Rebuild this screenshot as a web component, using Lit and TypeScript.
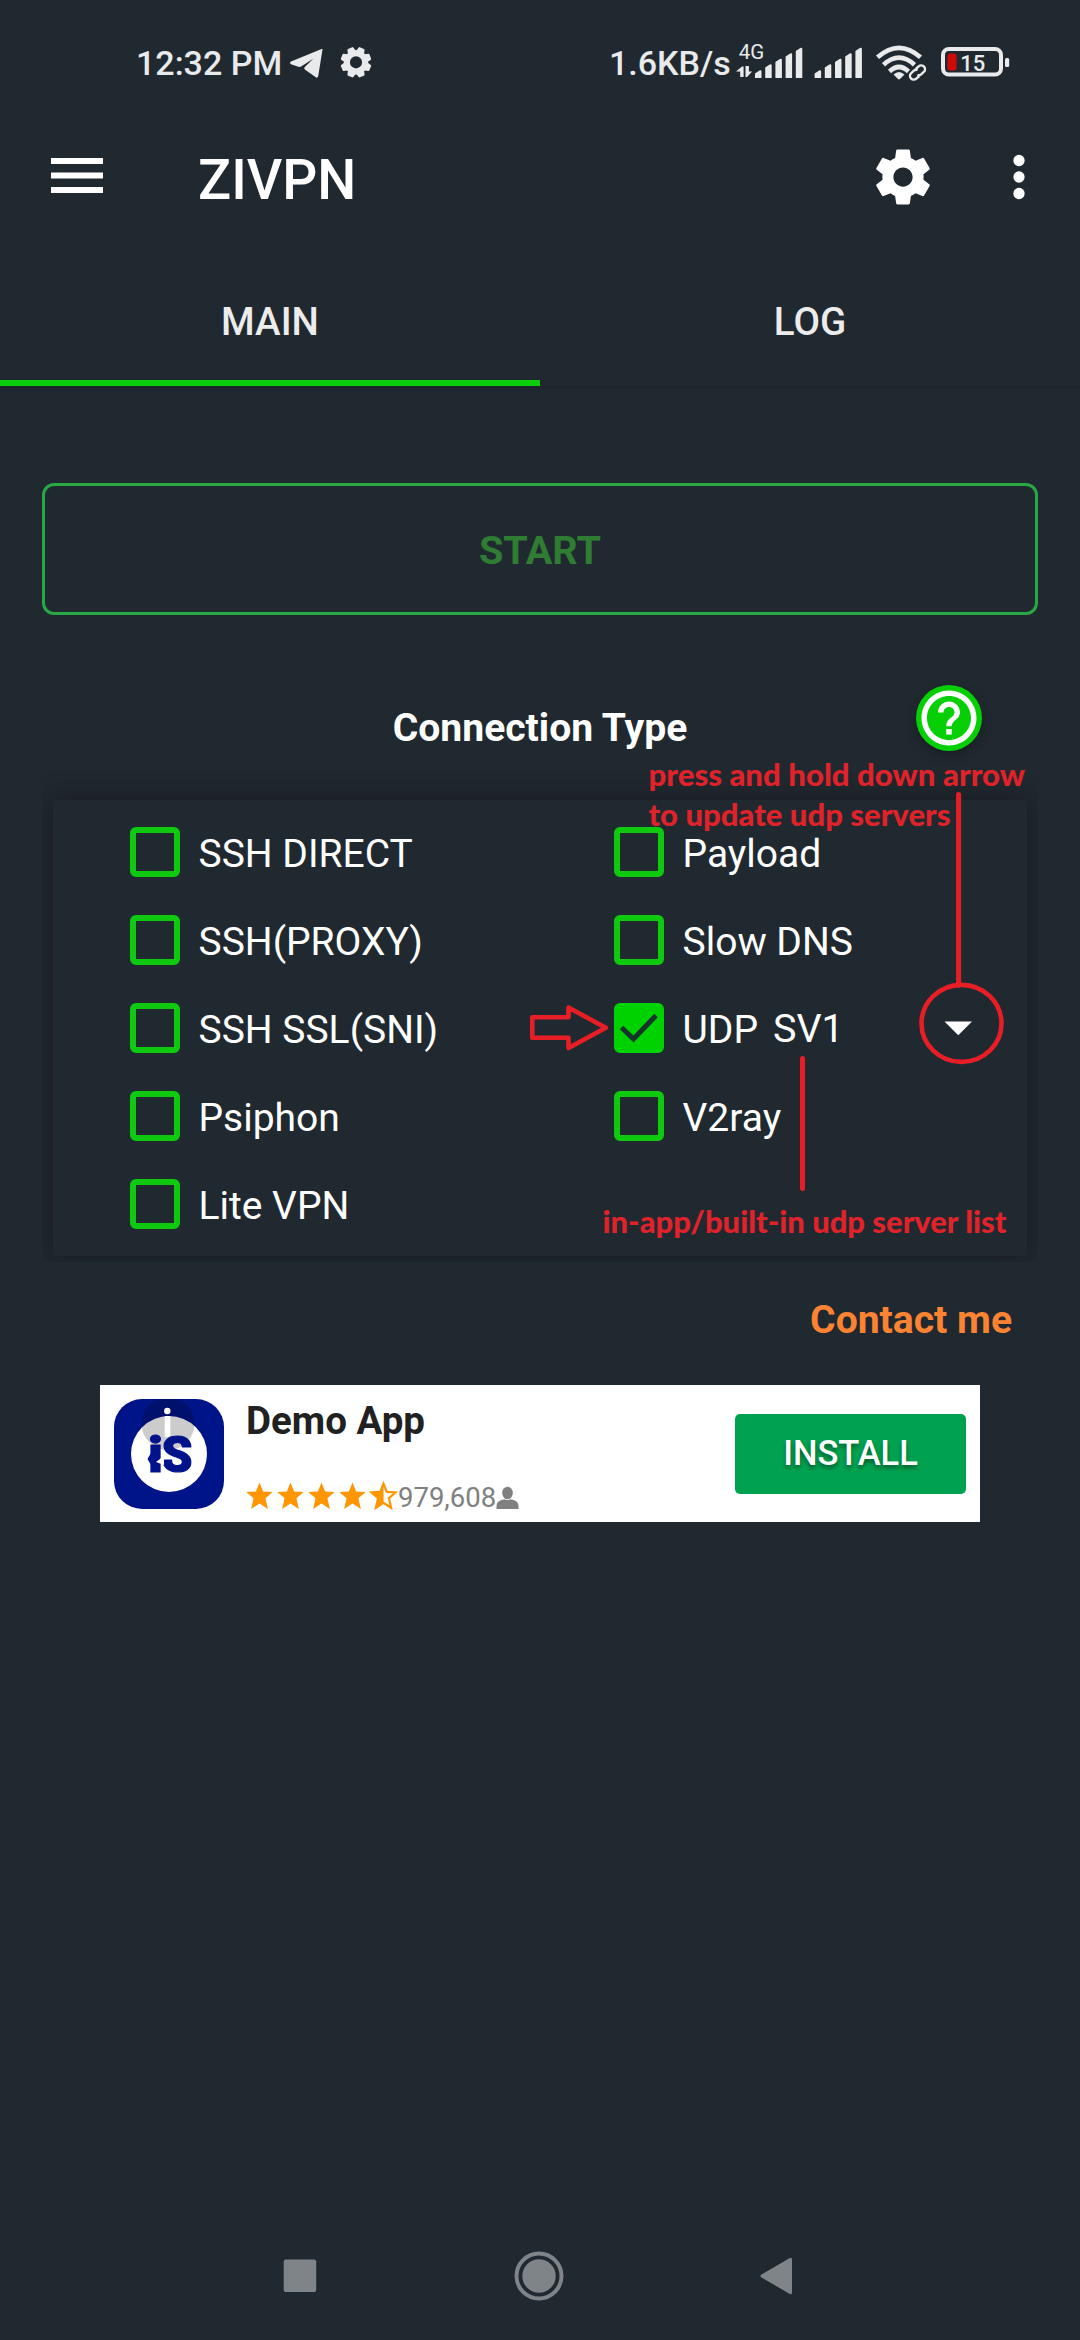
import { LitElement, html, css, svg, nothing } from "lit";
import { customElement, property } from "lit/decorators.js";

const STAR = "M0-13.8 L3.6-4.9 L13.2-4.2 L5.9 2 L8.4 12.6 L0 7.2 L-8.4 12.6 L-5.9 2 L-13.2-4.2 L-3.6-4.9Z";
const GEAR =
  "M19.43 12.98c.04-.32.07-.64.07-.98s-.03-.66-.07-.98l2.11-1.65c.19-.15.24-.42.12-.64l-2-3.46c-.12-.22-.39-.3-.61-.22l-2.49 1c-.52-.4-1.08-.73-1.69-.98l-.38-2.65C14.46 2.18 14.25 2 14 2h-4c-.25 0-.46.18-.49.42l-.38 2.65c-.61.25-1.17.59-1.69.98l-2.49-1c-.23-.09-.49 0-.61.22l-2 3.46c-.13.22-.07.49.12.64l2.11 1.65c-.04.32-.07.65-.07.98s.03.66.07.98l-2.11 1.65c-.19.15-.24.42-.12.64l2 3.46c.12.22.39.3.61.22l2.49-1c.52.4 1.08.73 1.69.98l.38 2.65c.03.24.24.42.49.42h4c.25 0 .46-.18.49-.42l.38-2.65c.61-.25 1.17-.59 1.69-.98l2.49 1c.23.09.49 0 .61-.22l2-3.46c.12-.22.07-.49-.12-.64l-2.11-1.65zM12 15.5c-1.93 0-3.5-1.57-3.5-3.5s1.57-3.5 3.5-3.5 3.5 1.57 3.5 3.5-1.57 3.5-3.5 3.5z";

@customElement("status-bar")
class StatusBar extends LitElement {
  static styles = css`
    :host {
      display: flex;
      height: 42px;
      padding: 42px 0 0 136px;
      color: #e8eaeb;
      fill: #e8eaeb;
      font: 500 34px/42px Roboto, sans-serif;
      white-space: nowrap;
    }
    .time { width: 150px; }
    .speed { width: 127px; margin-left: 236px; }
    svg { display: block; flex: none; overflow: visible; }
    .small { font: 400 20.5px Roboto, sans-serif; }
    .level { font: 500 22px Roboto, sans-serif; }
    .line { fill: none; stroke: #e8eaeb; }
    .low { fill: #d00a0a; }
  `;

  private bars(x: number) {
    return [8, 14, 19.5, 25, 30.5].map((h, i) => {
      const left = x + i * 10.2;
      return svg`<path d="M${left} 78v${-h + 3.5}l4.5-3q2-1 2 1V78z" />`;
    });
  }

  render() {
    const teeth = Array.from({ length: 8 }, (_, i) => i * 45 + 22.5);
    return html`
      <span class="time">12:32 PM</span>
      <svg width="87" height="42" viewBox="286 42 87 42">
        <path d="M322.5 49.5Q323 48.7 321.6 49.1L291 61.6Q289 63 291 64.3L298.4 66.8Q300 67.2 301.5 66.2L313.5 58.6 304.6 67.2Q303.6 68.3 304.8 69.4L315.5 77Q317.5 78.6 318.2 76.2Z" />
        <circle cx="356" cy="62.3" r="9.1" fill="none" stroke="#e8eaeb" stroke-width="6" />
        ${teeth.map(
          (a) => svg`<path d="M351.300 53L352.800 47.600Q353 46.900 353.800 46.900H358.200Q359 46.900 359.200 47.600L360.700 53Z" transform="rotate(${a} 356 62.3)" />`
        )}
      </svg>
      <span class="speed">1.6KB/s</span>
      <svg width="274" height="42" viewBox="736 42 274 42">
        <text class="small" x="738.8" y="59">4G</text>
        <path d="M736 71.5l6-5h1.6V77h-3.4v-5.500zM745.500 66h3.400v5.500h3.200l-5 5.500h-1.600z" />
        ${this.bars(755)} ${this.bars(814.6)}
        <g class="line" stroke-width="4.6">
          <path d="M877.5 57.300Q899 38.300 920.500 57.300" />
          <path d="M883.5 64.800Q899 50.500 914.500 64.800" />
          <path d="M889.500 71.500Q899 62.500 908.500 71.500" />
        </g>
        <path d="M893.500 74.500Q899 69.500 904.500 74.500L900 79Q899 79.800 898 79Z" />
        <g transform="rotate(-42 917.500 72.500)">
          <rect x="908" y="67.500" width="19" height="10" rx="5" fill="#212930" stroke="#212930" stroke-width="3" />
          <g class="line" stroke-width="2.400">
            <path d="M916.500 76.300h-4a3.800 3.800 0 0 1 0-7.600h3.500a3.800 3.800 0 0 1 3.300 2" />
            <path d="M918.500 68.700h4a3.800 3.800 0 0 1 0 7.600h-3.500a3.800 3.800 0 0 1-3.300-2" />
          </g>
        </g>
        <rect class="line" x="943" y="49" width="58" height="25.500" rx="6" stroke-width="4" />
        <rect x="1005" y="58" width="4.200" height="9" rx="1.500" />
        <rect class="low" x="947.500" y="53.500" width="9" height="17" rx="2.500" />
        <text class="level" x="960.300" y="71">15</text>
      </svg>
    `;
  }
}

@customElement("check-item")
class CheckItem extends LitElement {
  @property() label = "";
  @property() extra = "";
  @property({ type: Boolean }) checked = false;

  static styles = css`
    :host {
      display: flex;
      align-items: center;
      height: 88px;
      font: 400 39px/46px Roboto, sans-serif;
      color: #fff;
      white-space: nowrap;
    }
    .box {
      box-sizing: border-box;
      flex: none;
      width: 50px;
      height: 50px;
      border: 6px solid #0fc90f;
      border-radius: 6px;
      margin-right: 18.5px;
    }
    .on { background: #00d200; border-color: #00d200; }
    .tick { display: block; width: 38px; height: 38px; overflow: visible; }
    .label { padding-top: 4px; }
    .extra { margin-left: 15px; padding-top: 2px; font-size: 39.5px; }
  `;

  render() {
    return html`
      <span class="box ${this.checked ? "on" : ""}">
        ${this.checked
          ? html`<svg class="tick" viewBox="0 0 38 38">
              <path d="M1.500 18.500L13.500 30L36 6.500" fill="none" stroke="#16352a" stroke-width="5" />
            </svg>`
          : nothing}
      </span>
      <span class="label">${this.label}</span>
      ${this.extra ? html`<span class="extra">${this.extra}</span>` : nothing}
    `;
  }
}

@customElement("ad-banner")
class AdBanner extends LitElement {
  static styles = css`
    :host {
      box-sizing: border-box;
      display: flex;
      width: 880px;
      height: 137px;
      margin-left: 100px;
      padding: 14px;
      background: #fff;
      font-family: Roboto, sans-serif;
    }
    .logo { flex: none; width: 110px; height: 110px; }
    .mark { font: 900 50px Roboto, sans-serif; fill: #00138a; stroke: #00138a; stroke-width: 1.2px; }
    .info { flex: 1; padding-left: 22px; }
    .name { margin-top: -1px; font: 700 38.5px/45px Roboto, sans-serif; color: #212121; }
    .rating { display: flex; padding-top: 36px; height: 34px; }
    .stars { width: 153px; height: 34px; margin-left: -1px; }
    .count { padding-top: 2px; font: 400 27.5px/34px Roboto, sans-serif; color: #808080; }
    .person { width: 24px; height: 34px; }
    .install {
      width: 231px;
      height: 80px;
      margin-top: 15px;
      border-radius: 5px;
      background: #00a250;
      color: #fff;
      font: 500 34.500px/78px Roboto, sans-serif;
      text-align: center;
      text-shadow: 0 3px 4px rgba(0, 0, 0, 0.45);
    }
  `;

  render() {
    return html`
      <svg class="logo" viewBox="114 1399 110 110">
        <defs>
          <clipPath id="tile"><rect x="114" y="1399" width="110" height="110" rx="28" /></clipPath>
        </defs>
        <g clip-path="url(#tile)">
          <rect x="114" y="1399" width="110" height="110" fill="#001489" />
          <circle cx="169" cy="1454" r="38" fill="#fff" />
          <circle cx="168" cy="1423.500" r="26.500" fill="#000" opacity=".2" />
        </g>
        <circle cx="167.300" cy="1411" r="3.200" fill="#fff" />
        <rect x="164.700" y="1416" width="5.600" height="21" fill="#fff" />
        <text class="mark" x="148" y="1472" textLength="15" lengthAdjust="spacingAndGlyphs">i</text>
        <text class="mark" x="161.500" y="1472" textLength="31" lengthAdjust="spacingAndGlyphs">S</text>
        <path d="M151 1453l-3.500 6 3.500 6z" fill="#00138a" />
        <path d="M156 1462l8-6v9z" fill="#fff" />
      </svg>
      <div class="info">
        <div class="name">Demo App</div>
        <div class="rating">
          <svg class="stars" viewBox="245 1479 153 34">
            ${[259.5, 290.5, 321.5, 352.5].map(
              (x) => svg`<path d=${STAR} fill="#ff9500" transform="translate(${x} 1496.300)" />`
            )}
            <g transform="translate(383.500 1496.300)">
              <path d=${STAR} fill="#fff" stroke="#ff9500" stroke-width="2.400" transform="scale(.91)" />
              <path d="M0-13.800V7L-8.400 12.600-5.900 2-13.200-4.200-3.600-4.900Z" fill="#ff9500" />
            </g>
          </svg>
          <span class="count">979,608</span>
          <svg class="person" viewBox="494.500 1479 24 34" fill="#808080">
            <ellipse cx="506" cy="1493" rx="5.300" ry="6.300" />
            <path d="M495 1509v-3q0-4.500 5-6l3-.800q3 1.800 6 0l3 .800q5 1.500 5 6v3z" />
          </svg>
        </div>
      </div>
      <div class="install">INSTALL</div>
    `;
  }
}

@customElement("app-root")
class AppRoot extends LitElement {
  static styles = css`
    :host {
      position: relative;
      display: flex;
      flex-direction: column;
      width: 1080px;
      height: 2340px;
      overflow: hidden;
      background: #212930;
      color: #fff;
      font: 700 39.1px/46px Roboto, sans-serif;
    }
    .appbar { display: flex; align-items: center; height: 186px; padding-left: 51px; flex: none; }
    .menu { width: 52px; height: 36px; margin-top: -2px; }
    .title { flex: 1; padding: 6px 0 0 95px; font: 500 55px/64px Roboto, sans-serif; }
    .icon { width: 66px; height: 66px; fill: #fff; }
    .more { margin: 0 28px 0 50px; }
    .tabs { display: flex; height: 116px; flex: none; box-shadow: 0 2px 3px rgba(0, 0, 0, 0.15); }
    .tab {
      flex: 1;
      box-sizing: border-box;
      padding-top: 29px;
      border-bottom: 6px solid transparent;
      text-align: center;
      font-weight: 500;
      font-size: 38.5px;
      color: #ececec;
    }
    .active { border-color: #0bcd0b; }
    .start {
      flex: none;
      box-sizing: border-box;
      height: 132px;
      margin: 97px 42px 0;
      padding-top: 42px;
      border: 3px solid #28a745;
      border-radius: 12px;
      text-align: center;
      font-size: 39.6px;
      color: #2e7d32;
    }
    .heading {
      flex: none;
      display: grid;
      grid-template-columns: 1fr auto 1fr;
      height: 66px;
      margin-top: 70px;
      line-height: 86px;
    }
    .heading-text { grid-column: 2; }
    .help {
      justify-self: end;
      width: 66px;
      height: 66px;
      margin-right: 98px;
      border-radius: 50%;
      background: #06cf06;
      box-shadow: 0 5px 12px rgba(0, 0, 0, 0.3);
    }
    .frame { flex: none; margin: 21px 42px 0; padding: 28px 11px 6px; overflow: hidden; }
    .panel {
      display: grid;
      grid-template-columns: 484px 1fr;
      padding: 8px 0 8px 77px;
      background: #212930;
      box-shadow: 0 0 26px 4px rgba(0, 0, 0, 0.3);
    }
    .udp { display: flex; justify-content: space-between; align-items: center; }
    .contact { flex: none; height: 88px; padding: 35px 68px 0 0; text-align: right; color: #fb8332; }
    .nav { display: flex; justify-content: space-between; align-items: center; height: 129px; margin-top: auto; padding: 0 286px 0 283px; }
    .notes { position: absolute; inset: 0; width: 1080px; height: 2340px; fill: none; stroke: #e81e26; }
    .note { font: 900 29.5px Lato, "Open Sans", sans-serif; fill: #e0222a; stroke: none; }
  `;

  render() {
    return html`
      <status-bar></status-bar>
      <header class="appbar">
        <svg class="menu" viewBox="0 0 52 36" fill="#fff">
          <path d="M0 0h52v6H0zM0 14.500h52v6H0zM0 29h52v6H0z" />
        </svg>
        <div class="title">ZIVPN</div>
        <svg class="icon" viewBox="0 0 24 24"><path d=${GEAR} /></svg>
        <svg class="icon more" viewBox="0 0 24 24">
          <circle cx="12" cy="6" r="2.050" /><circle cx="12" cy="12" r="2.050" /><circle cx="12" cy="18" r="2.050" />
        </svg>
      </header>
      <nav class="tabs">
        <div class="tab active">MAIN</div>
        <div class="tab">LOG</div>
      </nav>
      <div class="start">START</div>
      <div class="heading">
        <span class="heading-text">Connection Type</span>
        <svg class="help" viewBox="0 0 24 24" fill="#fff">
          <path d="M11 18h2v-2h-2v2zm1-16C6.480 2 2 6.480 2 12s4.480 10 10 10 10-4.480 10-10S17.520 2 12 2zm0 18c-4.410 0-8-3.590-8-8s3.590-8 8-8 8 3.590 8 8-3.590 8-8 8zm0-14c-2.210 0-4 1.790-4 4h2c0-1.100.9-2 2-2s2 .9 2 2c0 2-3 1.750-3 5h2c0-2.250 3-2.500 3-5 0-2.210-1.790-4-4-4z" />
        </svg>
      </div>
      <div class="frame">
        <div class="panel">
          <div>
            ${["SSH DIRECT", "SSH(PROXY)", "SSH SSL(SNI)", "Psiphon", "Lite VPN"].map(
              (l) => html`<check-item label=${l}></check-item>`
            )}
          </div>
          <div>
            <check-item label="Payload"></check-item>
            <check-item label="Slow DNS"></check-item>
            <div class="udp">
              <check-item label="UDP" extra="SV1" checked></check-item>
              <svg width="94" height="66" viewBox="0 0 94 66" fill="#fff"><path d="M11.500 26.500h27.500l-13.750 13.750z" /></svg>
            </div>
            <check-item label="V2ray"></check-item>
          </div>
        </div>
      </div>
      <div class="contact">Contact me</div>
      <ad-banner></ad-banner>
      <footer class="nav">
        <svg width="34" height="50" viewBox="0 0 34 50" fill="#7e8488"><rect x=".7" y="8.500" width="32.500" height="32.500" rx="2" /></svg>
        <svg width="50" height="50" viewBox="0 0 50 50" fill="#7e8488">
          <circle cx="25" cy="25" r="22.500" fill="none" stroke="#7e8488" stroke-width="4" />
          <circle cx="25" cy="25" r="16.700" />
        </svg>
        <svg width="34" height="50" viewBox="0 0 34 50" fill="#7e8488" stroke="#7e8488" stroke-width="3" stroke-linejoin="round">
          <path d="M2 25L30.500 8.300V41.700z" />
        </svg>
      </footer>
      <svg class="notes" viewBox="0 0 1080 2340">
        <text class="note" x="648.500" y="786" textLength="376.500" lengthAdjust="spacingAndGlyphs">press and hold down arrow</text>
        <text class="note" x="648.500" y="826" textLength="302" lengthAdjust="spacingAndGlyphs">to update udp servers</text>
        <text class="note" x="602.500" y="1233" textLength="404" lengthAdjust="spacingAndGlyphs">in-app/built-in udp server list</text>
        <path d="M958.600 794.500V985M802.500 1058.500V1188.500" stroke-width="5" stroke-linecap="round" />
        <ellipse cx="961.500" cy="1023.400" rx="40" ry="38.500" stroke-width="4.600" />
        <path d="M532.300 1017.300H568.500V1007.500L605.800 1027.800L568.500 1048V1037.700H532.300Z" stroke-width="4.600" stroke-linejoin="round" />
      </svg>
    `;
  }
}
